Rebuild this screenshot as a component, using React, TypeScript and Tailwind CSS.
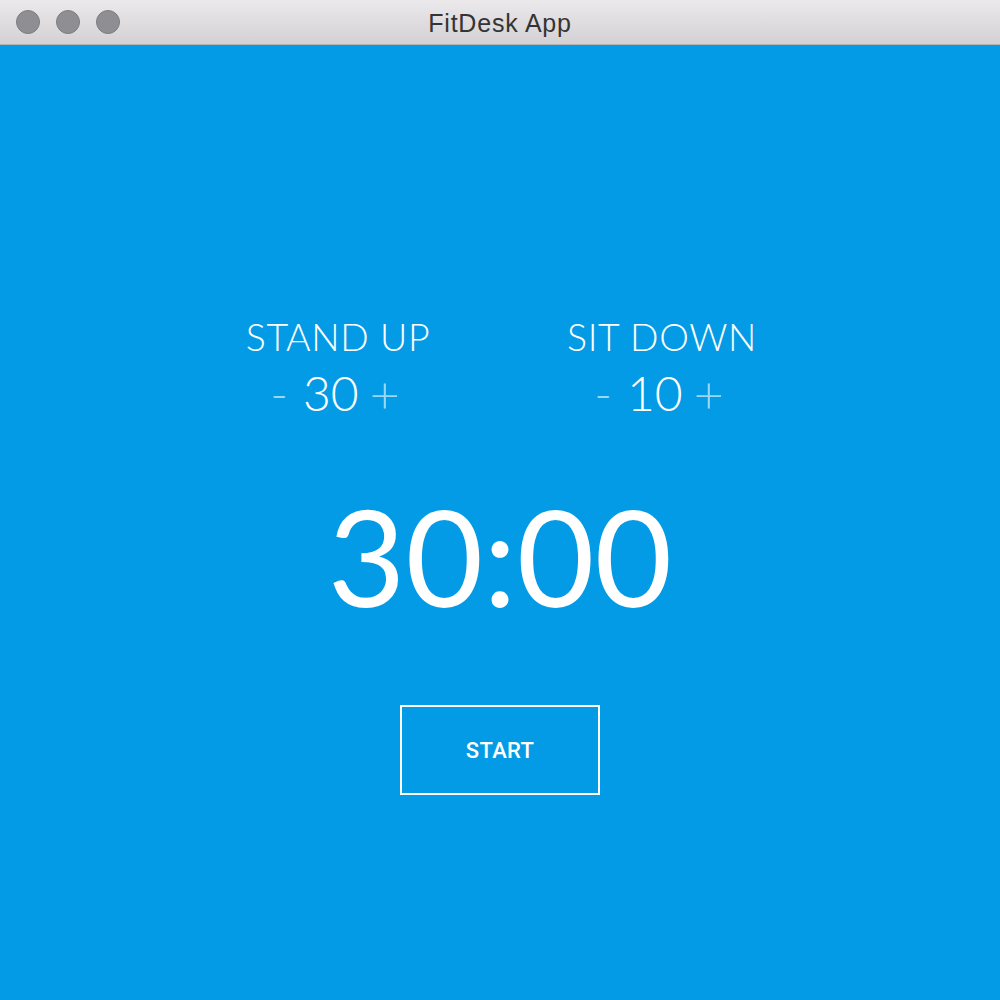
import React from "react";

function Counter({ label, value }: { label: string; value: number }) {
  return (
    <div className="w-[280px] flex flex-col items-center">
      <div className="text-[37.5px] leading-[44px] font-light tracking-[0.6px] text-white">{label}</div>
      <div className="flex items-center mt-[6px] mr-[6px] text-[48px] leading-[56px] font-light text-white">
        <span className="opacity-60 mr-[15px]">-</span>
        <span>{value}</span>
        <span className="opacity-60 ml-[11px] text-[52px]">+</span>
      </div>
    </div>
  );
}

export default function App() {
  return (
    <div className="w-[1000px] h-[1000px] flex flex-col overflow-hidden bg-[#039be5]" style={{ fontFamily: "Lato, sans-serif" }}>
      <div className="relative h-[45px] shrink-0 bg-gradient-to-b from-[#ebe9eb] to-[#d3d1d3] border-b border-[#b5b4b5] flex items-center justify-center">
        <div className="absolute left-[16px] top-[10px] flex gap-[16px]">
          <div className="w-[24px] h-[24px] rounded-full bg-[#8f8e92] border border-[#7d7c80]" />
          <div className="w-[24px] h-[24px] rounded-full bg-[#8f8e92] border border-[#7d7c80]" />
          <div className="w-[24px] h-[24px] rounded-full bg-[#8f8e92] border border-[#7d7c80]" />
        </div>
        <div className="pt-[4px] text-[25px] tracking-[0.8px] text-[#353435]" style={{ fontFamily: "'Liberation Sans', Arial, sans-serif" }}>FitDesk App</div>
      </div>
      <div className="flex-1 flex flex-col items-center pt-[270px]">
        <div className="flex gap-[44px]">
          <Counter label="STAND UP" value={30} />
          <Counter label="SIT DOWN" value={10} />
        </div>
        <div className="mt-[60px] text-[134px] leading-[150px] text-white font-normal">30:00</div>
        <button className="mt-[74px] w-[200px] h-[90px] border-2 border-white text-white text-[22px] font-medium tracking-[0.3px]" style={{ fontFamily: "Roboto, sans-serif" }}>
          START
        </button>
      </div>
    </div>
  );
}
